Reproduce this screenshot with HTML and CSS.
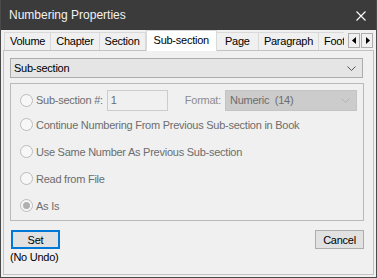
FILE: index.html
```html
<!DOCTYPE html>
<html lang="en">
<head>
    <meta charset="UTF-8">
    <title>Numbering Properties</title>
    <link rel="stylesheet" href="styles.css">
</head>
<body>
    <div class="venster">
        <div class="titelbalk">
            <span class="titel">Numbering Properties</span>
            <svg class="sluiten" width="10" height="10" viewBox="0 0 10 10">
                <path d="M0.5 0.5 L9.5 9.5 M9.5 0.5 L0.5 9.5" stroke="#ffffff" stroke-width="1.1" fill="none"/>
            </svg>
        </div>

        <div class="tabrij">
            <div class="tabs">
                <div class="tab">Volume</div>
                <div class="tab">Chapter</div>
                <div class="tab">Section</div>
                <div class="tab actief">Sub-section</div>
                <div class="tab">Page</div>
                <div class="tab">Paragraph</div>
                <div class="tab">Footnote</div>
            </div>
            <div class="pijlen">
                <span class="pijl"><svg width="5" height="7" viewBox="0 0 5 7"><path d="M4 0 L0 3.5 L4 7 Z" fill="#000"/></svg></span>
                <span class="pijl"><svg width="5" height="7" viewBox="0 0 5 7"><path d="M1 0 L5 3.5 L1 7 Z" fill="#000"/></svg></span>
            </div>
        </div>

        <div class="paneel">
            <div class="keuze">
                <span>Sub-section</span>
                <svg width="9" height="5" viewBox="0 0 9 5"><path d="M0.5 0.5 L4.5 4.5 L8.5 0.5" stroke="#555" fill="none"/></svg>
            </div>

            <div class="groep">
                <div class="rij eerste">
                    <span class="radio"></span>
                    <span class="label">Sub-section #:</span>
                    <span class="veld">1</span>
                    <span class="label formaat">Format:</span>
                    <span class="select-uit">
                        <span>Numeric&nbsp; (14)</span>
                        <svg width="9" height="5" viewBox="0 0 9 5"><path d="M0.5 0.5 L4.5 4.5 L8.5 0.5" stroke="#b4b4b4" fill="none"/></svg>
                    </span>
                </div>
                <div class="rij">
                    <span class="radio"></span>
                    <span class="label">Continue Numbering From Previous Sub-section in Book</span>
                </div>
                <div class="rij">
                    <span class="radio"></span>
                    <span class="label">Use Same Number As Previous Sub-section</span>
                </div>
                <div class="rij">
                    <span class="radio"></span>
                    <span class="label">Read from File</span>
                </div>
                <div class="rij">
                    <span class="radio aan"></span>
                    <span class="label">As Is</span>
                </div>
            </div>

            <div class="acties">
                <div class="links">
                    <button class="knop standaard">Set</button>
                    <span class="notitie">(No Undo)</span>
                </div>
                <button class="knop">Cancel</button>
            </div>
        </div>
    </div>
</body>
</html>
```

FILE: styles.css
```css
body {
    margin: 0;
    font-family: "Liberation Sans", Arial, sans-serif;
    font-size: 11px;
    letter-spacing: -0.25px;
    color: #000;
}

.venster {
    width: 377px;
    height: 278px;
    box-sizing: border-box;
    border: 1px solid #4a4a4a;
    border-top: none;
    background-color: #f0f0f0;
    display: flex;
    flex-direction: column;
}

.titelbalk {
    height: 30px;
    flex: none;
    background-color: #3b3b3b;
    display: flex;
    align-items: center;
    justify-content: space-between;
    padding: 0 10px 0 8px;
}

.titel {
    color: #f2f2f2;
    font-size: 12px;
    letter-spacing: 0;
}

.sluiten {
    margin-top: 1px;
}

.tabrij {
    height: 20px;
    flex: none;
    display: flex;
    align-items: flex-end;
    padding-left: 3px;
    position: relative;
    z-index: 1;
}

.tabs {
    display: flex;
    align-items: flex-end;
    width: 340px;
    overflow: hidden;
    height: 21px;
    margin-bottom: -1px;
}

.tab {
    flex: none;
    height: 18px;
    min-width: 42px;
    box-sizing: border-box;
    line-height: 17px;
    padding: 0 5px;
    border: 1px solid #d9d9d9;
    border-bottom: none;
    border-left: none;
    background-color: #f0f0f0;
    white-space: nowrap;
    text-align: center;
    margin-bottom: 1px;
}

.tab:first-child {
    border-left: 1px solid #d9d9d9;
    min-width: 0;
}

.tab.actief {
    height: 21px;
    line-height: 18px;
    margin-bottom: 0;
    padding: 0 7px;
    background-color: #ffffff;
    border-left: 1px solid #d9d9d9;
}

.pijlen {
    display: flex;
    margin-left: 4px;
    margin-bottom: 2px;
}

.pijl {
    width: 12px;
    height: 15px;
    box-sizing: border-box;
    border: 1px solid #adadad;
    background-color: #f0f0f0;
    display: flex;
    align-items: center;
    justify-content: center;
    margin-right: 1px;
}

.paneel {
    flex: 1;
    margin: 0 2px 2px 2px;
    border: 1px solid #c2c2c2;
    padding: 7px 9px 0 6px;
    display: flex;
    flex-direction: column;
}

.keuze {
    height: 20px;
    box-sizing: border-box;
    border: 1px solid #acacac;
    background-color: #e5e5e5;
    display: flex;
    align-items: center;
    justify-content: space-between;
    padding: 0 6px 0 3px;
    margin-right: 1px;
}

.groep {
    margin-top: 5px;
    border: 1px solid #b9b9b9;
    padding: 5px 0 1px 0;
}

.rij {
    height: 27px;
    display: flex;
    align-items: center;
    padding-left: 9px;
}

.rij.eerste {
    height: 22px;
}

.radio {
    width: 13px;
    height: 13px;
    box-sizing: border-box;
    border: 1px solid #bcbcbc;
    border-radius: 50%;
    background-color: #f7f7f7;
    display: flex;
    align-items: center;
    justify-content: center;
    flex: none;
}

.radio.aan::after {
    content: "";
    width: 7px;
    height: 7px;
    border-radius: 50%;
    background-color: #b0b0b0;
}

.label {
    color: #6d6d6d;
    margin-left: 3px;
    white-space: nowrap;
}

.veld {
    width: 61px;
    height: 21px;
    box-sizing: border-box;
    border: 1px solid #cccccc;
    color: #6d6d6d;
    line-height: 19px;
    padding-left: 3px;
    margin-left: 4px;
}

.formaat {
    margin-left: 17px;
    color: #8d8d8d;
}

.select-uit {
    width: 132px;
    height: 21px;
    box-sizing: border-box;
    background-color: #cccccc;
    border: 1px solid #c4c4c4;
    color: #6d6d6d;
    display: flex;
    align-items: center;
    justify-content: space-between;
    padding: 0 6px 0 4px;
    margin-left: 4px;
}

.acties {
    margin-top: 9px;
    display: flex;
    justify-content: space-between;
    align-items: flex-start;
    padding: 0 0 0 1px;
}

.links {
    display: flex;
    flex-direction: column;
}

.knop {
    width: 49px;
    height: 19px;
    box-sizing: border-box;
    border: 1px solid #adadad;
    background-color: #e1e1e1;
    font-family: "Liberation Sans", Arial, sans-serif;
    font-size: 11px;
    letter-spacing: -0.25px;
    padding: 0;
    color: #000;
}

.knop.standaard {
    border: 2px solid #0078d7;
}

.notitie {
    margin-top: 2px;
    margin-left: -1px;
}
```
